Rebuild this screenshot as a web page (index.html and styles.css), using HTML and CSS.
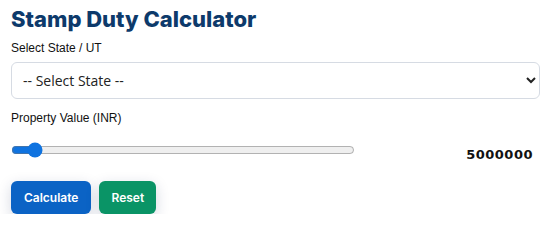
FILE: index.html
```html
<!DOCTYPE html>
<html lang="en">
<head>
    <meta charset="UTF-8">
    <meta name="viewport" content="width=device-width, initial-scale=1.0">
    <title>Stamp Duty Calculator</title>
    <link rel="stylesheet" href="styles.css">
</head>
<body>
    <div class="calc">
        <h1 class="title">Stamp Duty Calculator</h1>

        <label class="field-label" for="state">Select State / UT</label>
        <select id="state" class="select">
            <option>-- Select State --</option>
        </select>

        <label class="field-label" for="value">Property Value (INR)</label>
        <div class="range-row">
            <input id="value" class="range" type="range" min="100000" max="100000000" value="5000000">
            <div class="range-value">5000000</div>
        </div>

        <div class="actions">
            <button class="btn btn-primary">Calculate</button>
            <button class="btn btn-reset">Reset</button>
        </div>
    </div>
</body>
</html>
```

FILE: styles.css
```css
body {
    margin: 0;
    font-family: "Liberation Sans", Arial, sans-serif;
    background: #ffffff;
    color: #111;
}
.calc {
    padding: 6px 5px 0 11px;
}
.title {
    font-family: Inter, "Open Sans", sans-serif;
    font-size: 22px;
    font-weight: 800;
    color: #0d3a6b;
    margin: 0 0 9px 0;
}
.field-label {
    display: block;
    font-size: 12px;
    margin-bottom: 7px;
}
.select {
    display: block;
    width: 100%;
    height: 37px;
    padding: 0 7px;
    font-family: "Open Sans", sans-serif;
    font-size: 14px;
    color: #222;
    background: #fff;
    border: 1px solid #d6dbe3;
    border-radius: 6px;
    margin-bottom: 12px;
}
.range-row {
    display: flex;
    align-items: flex-start;
    margin-bottom: 19px;
}
.range {
    width: 344px;
    margin: 10px 0 0 0;
    accent-color: #0f73e0;
}
.range-value {
    margin: 15px 7px 0 auto;
    font-family: "DejaVu Sans", Verdana, sans-serif;
    font-size: 13px;
    font-weight: bold;
    letter-spacing: 0.5px;
}
.actions {
    display: flex;
    gap: 8px;
}
.btn {
    font-family: Inter, "Open Sans", sans-serif;
    font-size: 12px;
    font-weight: 600;
    color: #fff;
    border: none;
    border-radius: 6px;
    height: 33px;
    padding: 0 13px;
    box-shadow: 0 4px 14px rgba(20, 40, 90, 0.18);
    cursor: pointer;
}
.btn-primary {
    background: #0b63c5;
}
.btn-reset {
    background: #0a9466;
    padding: 0 12px;
}
```
